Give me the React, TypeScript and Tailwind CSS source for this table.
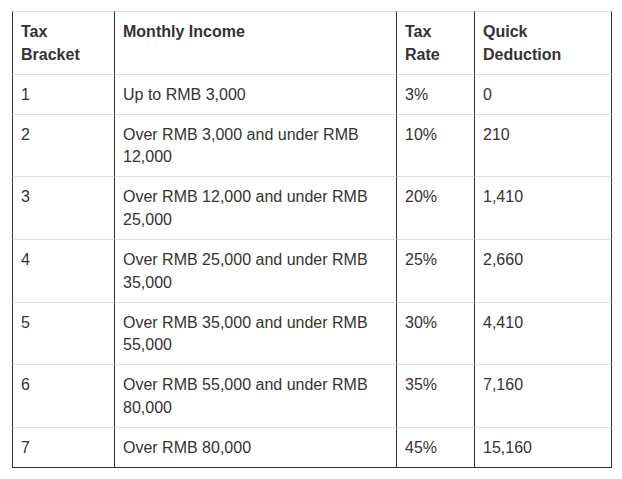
const rows = [
  ["1", "Up to RMB 3,000", "3%", "0"],
  ["2", "Over RMB 3,000 and under RMB 12,000", "10%", "210"],
  ["3", "Over RMB 12,000 and under RMB 25,000", "20%", "1,410"],
  ["4", "Over RMB 25,000 and under RMB 35,000", "25%", "2,660"],
  ["5", "Over RMB 35,000 and under RMB 55,000", "30%", "4,410"],
  ["6", "Over RMB 55,000 and under RMB 80,000", "35%", "7,160"],
  ["7", "Over RMB 80,000", "45%", "15,160"],
];

const cell = "border-l border-t border-l-[#333] border-t-[#ddd] px-2 pt-[9px] pb-[7px] align-top text-left";

export default function App() {
  return (
    <div className="min-h-screen bg-white pt-[11px] pl-[12px] font-['Liberation_Sans',Arial,sans-serif] text-[16px] leading-[1.42857] text-[#333]">
      <table className="w-[600px] table-fixed border-separate border-spacing-0 border-b border-b-[#333]">
        <colgroup>
          <col className="w-[102px]" />
          <col className="w-[282px]" />
          <col className="w-[78px]" />
          <col className="w-[138px]" />
        </colgroup>
        <thead>
          <tr>
            <th className={`${cell} font-bold`}>Tax Bracket</th>
            <th className={`${cell} font-bold`}>Monthly Income</th>
            <th className={`${cell} font-bold`}>Tax Rate</th>
            <th className={`${cell} border-r border-r-[#333] font-bold`}>Quick Deduction</th>
          </tr>
        </thead>
        <tbody>
          {rows.map((r) => (
            <tr key={r[0]}>
              <td className={cell}>{r[0]}</td>
              <td className={cell}>{r[1]}</td>
              <td className={cell}>{r[2]}</td>
              <td className={`${cell} border-r border-r-[#333]`}>{r[3]}</td>
            </tr>
          ))}
        </tbody>
      </table>
    </div>
  );
}
